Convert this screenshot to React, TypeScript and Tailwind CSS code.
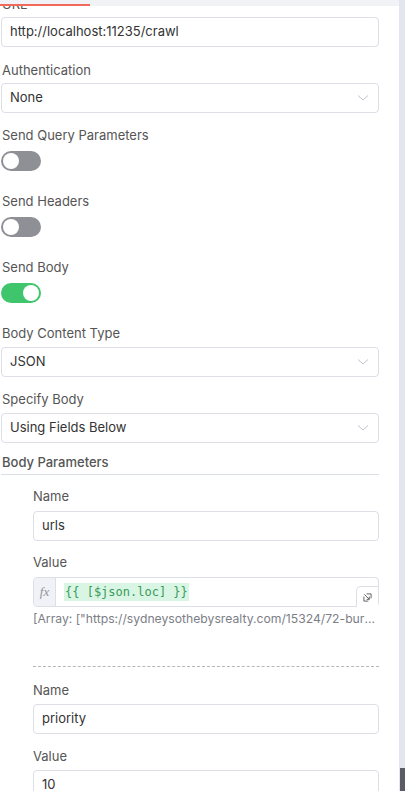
import { ReactNode } from "react";

// chevron used by the selects
function Chevron() {
  return (
    <svg width="12" height="8" viewBox="0 0 12 8" fill="none">
      <path d="M1 1.5 L6 6 L11 1.5" stroke="#c0c4cc" strokeWidth="1" />
    </svg>
  );
}

function Label({ children }: { children: ReactNode }) {
  return <div className="h-[18px] text-[13px] leading-[18px] text-[#555]">{children}</div>;
}

function TextInput({ value }: { value: string }) {
  return (
    <div className="flex h-[30px] items-center rounded-[4px] border border-[#dcdfe6] bg-white px-[8px] text-[13px] text-[#333]">
      {value}
    </div>
  );
}

function Select({ value }: { value: string }) {
  return (
    <div className="flex h-[30px] items-center justify-between rounded-[4px] border border-[#dcdfe6] bg-white pl-[8px] pr-[9px] text-[13px] text-[#333]">
      <span>{value}</span>
      <Chevron />
    </div>
  );
}

function Toggle({ on }: { on: boolean }) {
  return (
    <div
      className={`flex h-[20px] w-[40px] items-center rounded-full px-[2px] ${
        on ? "justify-end bg-[#3fc56b]" : "justify-start bg-[#8f9096]"
      }`}
    >
      <div className="h-[16px] w-[16px] rounded-full bg-white" />
    </div>
  );
}

export default function App() {
  return (
    <div
      className="relative flex h-[791px] w-[405px] overflow-hidden bg-white"
      style={{ fontFamily: "Inter, 'Noto Sans', sans-serif" }}
    >
      {/* sticky header edge over the content */}
      <div className="absolute left-0 top-0 z-10 h-[6px] w-[399px] bg-[#f0f2f6]">
        <div className="mt-[4px] h-[2px] w-[90px] bg-[#f0695a]" />
      </div>

      <div className="w-[399px] pl-[1px] pr-[20px]">
        {/* URL */}
        <div className="-mt-[5px]">
          <div className="pl-[1px]"><Label>URL</Label></div>
          <div className="mt-[4px]">
            <TextInput value="http://localhost:11235/crawl" />
          </div>
        </div>

        <div className="mt-[14px]">
          <div className="pl-[1px]"><Label>Authentication</Label></div>
          <div className="mt-[4px]"><Select value="None" /></div>
        </div>

        <div className="mt-[13px]">
          <div className="pl-[1px]"><Label>Send Query Parameters</Label></div>
          <div className="mt-[7px]"><Toggle on={false} /></div>
        </div>

        <div className="mt-[21px]">
          <div className="pl-[1px]"><Label>Send Headers</Label></div>
          <div className="mt-[7px]"><Toggle on={false} /></div>
        </div>

        <div className="mt-[21px]">
          <div className="pl-[1px]"><Label>Send Body</Label></div>
          <div className="mt-[7px]"><Toggle on={true} /></div>
        </div>

        <div className="mt-[21px]">
          <div className="pl-[1px]"><Label>Body Content Type</Label></div>
          <div className="mt-[5px]"><Select value="JSON" /></div>
        </div>

        <div className="mt-[13px]">
          <div className="pl-[1px]"><Label>Specify Body</Label></div>
          <div className="mt-[5px]"><Select value="Using Fields Below" /></div>
        </div>

        {/* Body Parameters */}
        <div className="mt-[10px] border-b border-[#dbdfe7] pb-[3px] pl-[1px] text-[13px] font-medium leading-[18px] text-[#555]">
          Body Parameters
        </div>

        <div className="pl-[32px]">
          <div className="mt-[12px]">
            <Label>Name</Label>
            <div className="mt-[6px]"><TextInput value="urls" /></div>
          </div>

          <div className="mt-[12px]">
            <Label>Value</Label>
            <div className="mt-[6px] flex h-[30px] rounded-[4px] border border-[#dcdfe6] bg-white">
              <div
                className="flex w-[22px] items-center justify-center rounded-l-[4px] border-r border-[#dcdfe6] bg-[#f0f2f7] text-[13px] italic text-[#909399]"
                style={{ fontFamily: "'Liberation Serif', serif" }}
              >
                fx
              </div>
              <div className="flex flex-1 items-center pl-[8px]">
                <span
                  className="bg-[#d9f5e3] px-[1px] text-[12px] leading-[18px] text-[#3a9a5e]"
                  style={{ fontFamily: "'DejaVu Sans Mono', 'Liberation Mono', monospace" }}
                >
                  {"{{ [$json.loc] }}"}
                </span>
              </div>
              <div className="flex w-[22px] flex-col justify-end">
                <div className="-mb-[1px] -mr-[1px] flex h-[21px] w-[22px] items-center justify-center rounded-tl-[5px] border-l border-t border-[#dcdfe6] bg-white">
                  <svg width="9" height="9" viewBox="0 0 10 10" fill="none" stroke="#555" strokeWidth="1">
                    <path d="M1 4 V9 H6" />
                    <path d="M4 1 H9 V6" />
                    <path d="M1.5 1.5 L7 7" />
                    <path d="M7 4 V7 H4" />
                  </svg>
                </div>
              </div>
            </div>
            <div className="mt-[3px] truncate text-[12.2px] leading-[18px] text-[#7c7e86]">
              [Array: ["https://sydneysothebysrealty.com/15324/72-burraneer-bay-road"]]
            </div>
          </div>

          <div className="mt-[38px] border-t border-dashed border-[#b6b7bd]" />

          <div className="mt-[14px]">
            <Label>Name</Label>
            <div className="mt-[5px]"><TextInput value="priority" /></div>
          </div>

          <div className="mt-[13px]">
            <Label>Value</Label>
            <div className="mt-[5px]"><TextInput value="10" /></div>
          </div>
        </div>
      </div>

      {/* scrollbar */}
      <div className="relative flex w-[6px] flex-col bg-[#e3e6ee]">
        <div className="flex-1" />
        <div className="ml-[1px] h-[23px] w-[5px] bg-[#5b5c63]" />
      </div>
    </div>
  );
}
